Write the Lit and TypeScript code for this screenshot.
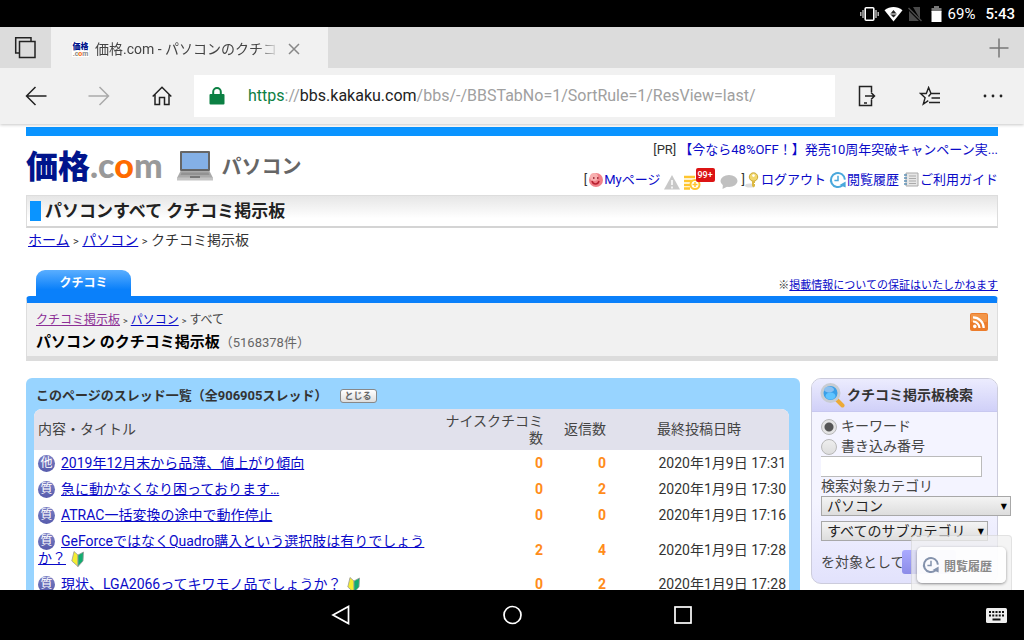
import { LitElement, html, css, svg } from "lit";
import { customElement } from "lit/decorators.js";

interface Thread {
  kind: string;
  title: string;
  beginner: boolean;
  nice: number;
  replies: number;
  date: string;
}

const threads: Thread[] = [
  { kind: "他", title: "2019年12月末から品薄、値上がり傾向", beginner: false, nice: 0, replies: 0, date: "2020年1月9日 17:31" },
  { kind: "質", title: "急に動かなくなり困っております…", beginner: false, nice: 0, replies: 2, date: "2020年1月9日 17:30" },
  { kind: "質", title: "ATRAC一括変換の途中で動作停止", beginner: false, nice: 0, replies: 0, date: "2020年1月9日 17:16" },
  { kind: "質", title: "GeForceではなくQuadro購入という選択肢は有りでしょうか？", beginner: true, nice: 2, replies: 4, date: "2020年1月9日 17:28" },
  { kind: "質", title: "現状、LGA2066ってキワモノ品でしょうか？", beginner: true, nice: 0, replies: 2, date: "2020年1月9日 17:28" },
];

const historyIcon = (color: string, size: number) => html`<svg width=${size} height=${size} viewBox="0 0 18 18" fill="none" aria-hidden="true">
  ${svg`<path d="M13.6 14.2A7 7 0 1 1 15.9 8.600" stroke=${color} stroke-width="2"/>
  <path d="M16.600 16.600v-6l-6 3.400z" fill=${color}/>
  <path d="M9 4.800v4.700H5.400" stroke=${color} stroke-width="1.500"/>`}
</svg>`;

const reset = css`
  * { box-sizing: border-box; }
  button { font: inherit; color: inherit; border: 0; background: none; padding: 0; margin: 0; }
  svg { display: block; }
  a { color: #0a0ac8; }
`;

@customElement("status-bar")
class StatusBar extends LitElement {
  static styles = [reset, css`
    :host { display: flex; align-items: center; justify-content: flex-end; height: 27px; padding-right: 9px; background: #000; color: #fff; font-size: 15px; line-height: 28px; }
    .icons { display: flex; align-items: center; gap: 5px; margin-right: 3px; }
    .clock { margin-left: 10px; font-weight: 500; }
  `];
  render() {
    return html`
      <div class="icons">
        <svg width="19" height="16" viewBox="0 0 19 16" aria-hidden="true">
          <rect x="5.2" y="1.7" width="8.6" height="12.6" rx="1" fill="none" stroke="#fff" stroke-width="1.6"/>
          <path d="M3 4v8M16 4v8M.8 6v4M18.2 6v4" stroke="#ccc" stroke-width="1.3"/>
        </svg>
        <svg width="19" height="16" viewBox="0 0 19 16" aria-hidden="true">
          <path d="M.5 4.2C6-.1 13-.1 18.5 4.2L9.500 15.500z" fill="#fff"/>
          <path d="M9.500 4 12 7H7zM9.500 11.500 7 9h5z" fill="#222"/><path d="M6.500 8h6" stroke="#222"/>
        </svg>
        <svg width="14" height="16" viewBox="0 0 14 16" aria-hidden="true">
          <path d="M5 1h7v12zM1 5l10 10H1z" fill="#4a4a4a"/><path d="M.5 2l13 13" stroke="#4a4a4a" stroke-width="1.4"/>
        </svg>
        <svg width="18" height="16" viewBox="0 0 18 16" aria-hidden="true">
          <path d="M7 0h5v2h2.500v4h-10V2H7z" fill="#777"/><path d="M4.500 5h10v11h-10z" fill="#fff"/>
        </svg>
      </div>
      <span>69%</span><span class="clock">5:43</span>`;
  }
}

@customElement("browser-chrome")
class BrowserChrome extends LitElement {
  static styles = [reset, css`
    :host { display: block; background: #f1f1f1; color: #222; position: relative; z-index: 1; box-shadow: 0 1px 3px rgba(0, 0, 0, .22); }
    .tabs { display: flex; align-items: stretch; height: 41px; background: #dcdcdc; }
    .all { width: 51px; display: flex; align-items: center; justify-content: center; }
    .tab { display: flex; align-items: center; width: 277px; padding: 3px 28px 0 21px; background: #f1f1f1; }
    .favicon { flex: none; width: 17px; padding-top: 1px; background: #fff; font-size: 8px; line-height: 8px; font-weight: 900; color: #00148c; text-align: center; }
    .favicon small { display: block; font-size: 7px; line-height: 6px; font-weight: 700; color: #888; }
    .favicon em { font-style: normal; color: #f60; }
    .title { flex: 1; margin: 0 9px 0 6px; font-size: 14px; line-height: 24px; color: #444; white-space: nowrap; overflow: hidden; mask-image: linear-gradient(90deg, #000 88%, transparent); }
    .new { margin-left: auto; width: 51px; display: flex; align-items: center; justify-content: center; }
    .tools { display: flex; align-items: center; height: 56px; padding-left: 4px; }
    .nav { flex: none; width: 63px; display: flex; justify-content: center; }
    .address { flex: 1; display: flex; align-items: center; gap: 23px; height: 42px; margin-left: 1px; padding: 0 15px; background: #fff; font-size: 16px; line-height: 24px; color: #a0a0a0; white-space: nowrap; }
    .scheme { color: #0b8043; }
    .host { color: #222; }
  `];
  render() {
    return html`
      <div class="tabs">
        <button class="all" aria-label="タブ一覧">
          <svg width="23" height="23" viewBox="0 0 23 23" fill="none" stroke="#222" stroke-width="1.500"><path d="M5.500 17H1.700V1.700H17v3.500"/><path d="M5.500 5.500h15.500v16H5.500z"/></svg>
        </button>
        <div class="tab">
          <span class="favicon">価格<small>.c<em>o</em>m</small></span>
          <span class="title">価格.com - パソコンのクチコ</span>
          <button aria-label="タブを閉じる"><svg width="12" height="12" viewBox="0 0 12 12" stroke="#888" stroke-width="1.500"><path d="M1 1l10 10M11 1L1 11"/></svg></button>
        </div>
        <button class="new" aria-label="新しいタブ"><svg width="20" height="20" viewBox="0 0 20 20" stroke="#777" stroke-width="1.500"><path d="M10 .5v19M.5 10h19"/></svg></button>
      </div>
      <div class="tools">
        <button class="nav" aria-label="戻る"><svg width="22" height="20" viewBox="0 0 22 20" fill="none" stroke="#222" stroke-width="1.500"><path d="M21.500 10H1.500M10.500 1l-9 9 9 9"/></svg></button>
        <button class="nav" aria-label="進む"><svg width="22" height="20" viewBox="0 0 22 20" fill="none" stroke="#aaa" stroke-width="1.500"><path d="M.5 10h20M11.500 1l9 9-9 9"/></svg></button>
        <button class="nav" aria-label="ホーム"><svg width="20" height="20" viewBox="0 0 20 20" fill="none" stroke="#222" stroke-width="1.500"><path d="M.7 10.500 10 1.300l9.300 9.200M3 8.500V18.500h4.500V11.500h5v7H17v-10"/></svg></button>
        <div class="address">
          <svg width="16" height="18" viewBox="0 0 16 18"><path d="M4.200 8V4.800a3.800 3.800 0 0 1 7.600 0V8" fill="none" stroke="#0b8043" stroke-width="2"/><rect x=".5" y="7" width="15" height="10.500" rx="1" fill="#0b8043"/></svg>
          <span><span class="scheme">https</span>://<span class="host">bbs.kakaku.com</span>/bbs/-/BBSTabNo=1/SortRule=1/ResView=last/</span>
        </div>
        <button class="nav" aria-label="PCで続行"><svg width="18" height="22" viewBox="0 0 18 22" fill="none" stroke="#222" stroke-width="1.500"><path d="M13.500 7V1.500h-12v19h12V15M7 11h9M13 7.500l3.500 3.500-3.500 3.500"/><path d="M6 18h3"/></svg></button>
        <button class="nav" aria-label="お気に入り"><svg width="22" height="20" viewBox="0 0 22 20" fill="none" stroke="#222" stroke-width="1.400"><path d="M21 7.500h-9L9.600 1.500 7.300 7.500H1.500l4.600 4.300L4.300 18l5-3.400M12 7.500l-2.500 3M12.500 12H21M10 16.500h11"/></svg></button>
        <button class="nav" aria-label="設定など"><svg width="20" height="4" viewBox="0 0 20 4" fill="#222"><circle cx="2" cy="2" r="1.400"/><circle cx="10" cy="2" r="1.400"/><circle cx="18" cy="2" r="1.400"/></svg></button>
      </div>`;
  }
}

@customElement("site-header")
class SiteHeader extends LitElement {
  static styles = [reset, css`
    :host { display: block; border-top: 9px solid #0a94ff; }
    .top { display: flex; justify-content: space-between; height: 59px; }
    .brand { display: flex; align-items: center; gap: 14px; }
    .logo { display: flex; align-items: baseline; font-size: 32px; line-height: 40px; font-weight: 900; color: #00148c; text-decoration: none; }
    .com { font-family: Lato, sans-serif; font-size: 34px; color: #999; }
    .com em { font-style: normal; color: #ff6a00; }
    .category { margin-left: -5px; font-size: 20px; font-weight: 700; color: #666; }
    .side { font-size: 13px; line-height: 20px; padding-top: 4px; }
    .side a { text-decoration: none; }
    .pr { display: flex; justify-content: flex-end; gap: 3px; }
    .links { display: flex; align-items: center; justify-content: flex-end; margin-top: 10px; }
    .links a { display: flex; align-items: center; margin-right: 3px; }
    .links a:last-child { margin-right: 0; }
    .note { position: relative; margin: 4px 19px 0 4px; }
    .count { position: absolute; left: 12px; top: -7px; padding: 0 2px; border-radius: 2px; background: #dc1414; color: #fff; font-size: 9px; line-height: 14px; font-weight: 500; }
    .gray { margin-top: 4px; }
    .bubble { margin: 4px 4px 0 0; }
    h1 { display: flex; align-items: center; gap: 4px; margin: 0; height: 33px; padding-left: 3px; border: 1px solid #ddd; border-bottom: 2px solid #d4d4d4; background: linear-gradient(#e6e6e6, #fff 75%); color: #222; font-size: 17px; line-height: 30px; }
    h1::before { content: ""; width: 11px; height: 20px; background: #0a94ff; }
    .crumbs { padding: 2px 2px 0; font-size: 14px; line-height: 20px; color: #333; }
    .gt { font-size: 11px; }
  `];
  render() {
    return html`
      <div class="top">
        <div class="brand">
          <a class="logo" href="#">価格<span class="com">.c<em>o</em>m</span></a>
          <svg width="36" height="30" viewBox="0 0 36 30" aria-hidden="true">
            <rect x="3" y="0" width="30" height="20" rx="1" fill="#666"/><rect x="5" y="2" width="26" height="16" fill="#84b0e6"/>
            <path d="M3.500 20h29l3.500 7H0z" fill="#aaa"/><path d="M0 26.500h36v3H0z" fill="#c4c4c4"/><path d="M4.500 21.500h27l1 2.500H3.500z" fill="#929292"/><path d="M13 25h10v2H13z" fill="#777"/>
          </svg>
          <span class="category">パソコン</span>
        </div>
        <div class="side">
          <div class="pr"><span>[PR]</span><a href="#">【今なら48%OFF！】発売10周年突破キャンペーン実...</a></div>
          <div class="links">
            <span>[</span>
            <a href="#"><svg width="17" height="16" viewBox="0 0 17 16"><circle cx="9" cy="8" r="7" fill="#f08088"/><circle cx="7" cy="5" r="4" fill="#f8b0b0"/><path d="M5 9c1 4 6 4 7 0" fill="none" stroke="#b82030" stroke-width="1.500"/><path d="M6 6h1.500M10 6h1.500" stroke="#901828" stroke-width="1.500"/></svg>Myページ</a>
            <svg class="gray" width="16" height="15" viewBox="0 0 16 15" aria-hidden="true"><path d="M8 0l8 14.500H0z" fill="#c8c8c8"/><path d="M8 5v5M8 11.500v2" stroke="#fff" stroke-width="1.500"/></svg>
            <span class="note"><svg width="17" height="15" viewBox="0 0 17 15" aria-hidden="true"><path d="M0 2h11M0 6h9M0 10h6M0 13.500h6" stroke="#ffc52e" stroke-width="2.500"/><circle cx="11" cy="9.500" r="4.500" fill="#fff" stroke="#ffc52e" stroke-width="2"/><path d="M11 7v5M8.500 9.500h5" stroke="#ffc52e" stroke-width="1.500"/></svg><span class="count">99+</span></span>
            <svg class="bubble" width="18" height="14" viewBox="0 0 18 14" aria-hidden="true"><ellipse cx="9" cy="6" rx="8.500" ry="6" fill="#c0c0c0"/><path d="M3 9l-.5 5 6-3z" fill="#c0c0c0"/></svg>
            <span>]</span>
            <a href="#"><svg width="16" height="16" viewBox="0 0 16 16"><ellipse cx="5" cy="13.500" rx="5" ry="2" fill="#ddd"/><circle cx="8.500" cy="5" r="4.200" fill="#f2d76c" stroke="#c9a93a"/><circle cx="8.500" cy="3.600" r="1.300" fill="#fff"/><path d="M7 9h3v2H9v1h1v2l-1.500 1.500L7 14z" fill="#dcb942"/></svg>ログアウト</a>
            <a href="#">${historyIcon("#4aa8dc", 18)}閲覧履歴</a>
            <a href="#"><svg width="18" height="16" viewBox="2 0 18 16"><path d="M6 1h12v13H6z" fill="#e6e6e6" stroke="#aaa"/><path d="M9 4h7M9 6.500h7M9 9h7M9 11.500h7" stroke="#aaa"/><path d="M4 3h3M4 6h3M4 9h3M4 12h3" stroke="#5f93b8" stroke-width="1.400"/></svg>ご利用ガイド</a>
          </div>
        </div>
      </div>
      <h1>パソコンすべて クチコミ掲示板</h1>
      <nav class="crumbs"><a href="#">ホーム</a> <span class="gt">&gt;</span> <a href="#">パソコン</a> <span class="gt">&gt;</span> クチコミ掲示板</nav>`;
  }
}

@customElement("board-heading")
class BoardHeading extends LitElement {
  static styles = [reset, css`
    :host { display: block; margin-top: 18px; }
    .row { display: flex; justify-content: space-between; align-items: flex-end; padding-left: 10px; }
    .tab { width: 95px; border-radius: 9px 9px 0 0; background: linear-gradient(#5aaeff, #0a80fa 75%); color: #fff; font-size: 12px; line-height: 26px; font-weight: 700; text-align: center; text-decoration: none; }
    .notice { font-size: 11px; line-height: 20px; }
    .panel { display: flex; justify-content: space-between; align-items: flex-start; padding: 7px 9px 3px; border: 1px solid #ddd; border-top: 7px solid #0a80fa; border-bottom: 5px solid #dcdcdc; border-radius: 4px 4px 0 0; background: #f1f1f1; }
    .crumbs { font-size: 12px; line-height: 20px; color: #444; }
    .visited { color: #8c2f96; }
    .gt { font-size: 9px; }
    h2 { margin: 0; font-size: 15px; line-height: 22px; color: #000; }
    .total { font-size: 13px; line-height: 20px; font-weight: 400; color: #666; }
    .rss { margin-top: 3px; }
  `];
  render() {
    return html`
      <div class="row">
        <a class="tab" href="#">クチコミ</a>
        <span class="notice">※<a href="#">掲載情報についての保証はいたしかねます</a></span>
      </div>
      <div class="panel">
        <div>
          <nav class="crumbs"><a class="visited" href="#">クチコミ掲示板</a> <span class="gt">&gt;</span> <a href="#">パソコン</a> <span class="gt">&gt;</span> すべて</nav>
          <h2>パソコン のクチコミ掲示板<span class="total">（5168378件）</span></h2>
        </div>
        <a class="rss" href="#" aria-label="RSS"><svg width="18" height="18" viewBox="0 0 18 18"><rect width="18" height="18" rx="2" fill="#ec7d2c"/><rect x="1" y="1" width="16" height="8" rx="1" fill="#f29548"/><circle cx="4.800" cy="13.400" r="1.800" fill="#fff"/><path d="M3 8.500a6.500 6.500 0 0 1 6.500 6.500M3 4.300A10.700 10.700 0 0 1 13.700 15" fill="none" stroke="#fff" stroke-width="2.200"/></svg></a>
      </div>`;
  }
}

@customElement("thread-list")
class ThreadList extends LitElement {
  static styles = [reset, css`
    :host { display: block; padding: 0 11px 0 8px; border-radius: 6px 6px 0 0; background: #98d4ff; }
    .head { display: flex; align-items: center; gap: 12px; height: 31px; padding: 4px 0 0 2px; }
    h3 { margin: 0; font-size: 13px; line-height: 20px; color: #333; }
    .close { height: 14px; padding: 0 4px; border: 1px solid #888; border-radius: 3px; background: linear-gradient(#fff, #ddd); color: #666; font-size: 9px; line-height: 12px; font-weight: 700; }
    table { width: 100%; table-layout: fixed; border-collapse: collapse; background: #fff; border-radius: 8px 8px 0 0; overflow: hidden; font-size: 14px; line-height: 17px; }
    th { height: 41px; padding: 3px; background: #e1e1ec; font-weight: 400; color: #444; text-align: right; }
    td { padding: 5px 3px 4px; text-align: right; vertical-align: middle; }
    .title { text-align: left; padding-left: 4px; }
    .nice { width: 113px; }
    .reply { width: 63px; }
    .date { width: 180px; text-align: center; }
    .num { color: #ff8c1a; font-weight: 700; }
    .kind { display: inline-block; width: 17px; height: 17px; margin-right: 6px; border-radius: 50%; background: linear-gradient(#7b7fc4, #565bac); color: #fff; font-size: 12px; line-height: 17px; text-align: center; vertical-align: bottom; }
    .leaf { display: inline-block; margin: -3px 0 -3px 5px; vertical-align: middle; }
  `];
  render() {
    return html`
      <div class="head"><h3>このページのスレッド一覧（全906905スレッド）</h3><button class="close">とじる</button></div>
      <table>
        <thead><tr><th class="title">内容・タイトル</th><th class="nice">ナイスクチコミ数</th><th class="reply">返信数</th><th class="date">最終投稿日時</th></tr></thead>
        <tbody>
          ${threads.map((t) => html`<tr>
            <td class="title"><span class="kind">${t.kind}</span><a href="#">${t.title}</a>${t.beginner
              ? html`<svg class="leaf" width="13" height="16" viewBox="0 0 13 16" aria-hidden="true"><path d="M3 .5 7 4v11.500L.8 10z" fill="#f4ee30" stroke="#999" stroke-width=".8"/><path d="M7 4 12.500 1 12 10l-5 5.500z" fill="#12ad70" stroke="#999" stroke-width=".8"/></svg>`
              : ""}</td>
            <td class="num">${t.nice}</td><td class="num">${t.replies}</td><td>${t.date}</td>
          </tr>`)}
        </tbody>
      </table>`;
  }
}

@customElement("board-search")
class BoardSearch extends LitElement {
  static styles = [reset, css`
    :host { display: block; align-self: start; border: 1px solid #ccccdc; border-radius: 10px; background: linear-gradient(#f4f4ff 60%, #e2e2fc); }
    h3 { display: flex; align-items: center; gap: 2px; margin: 0; height: 33px; padding-left: 8px; border-bottom: 1px solid #c8c8f0; border-radius: 9px 9px 0 0; background: linear-gradient(#ececfe, #d0d0f8); color: #333; font-size: 14px; line-height: 30px; }
    form { padding: 4px 0 9px 9px; font-size: 14px; line-height: 20px; color: #444; }
    .choice { display: flex; align-items: center; gap: 4px; }
    .choice input { appearance: none; width: 16px; height: 16px; margin: 2px 0 0; border: 1px solid #b8b8b8; border-radius: 50%; background: linear-gradient(#eee, #ddd); }
    .choice input:checked { background: radial-gradient(#555 0 4px, #e4e4e4 5px); }
    .word { display: block; width: 161px; height: 21px; margin: 0; border: 1px solid #bbb; border-left: 0; background: #fff; font: inherit; }
    .cat { display: block; line-height: 19px; }
    .pick { position: relative; display: block; width: 190px; margin-bottom: 5px; }
    .pick::after { content: "▼"; position: absolute; right: 4px; top: 0; font-family: "DejaVu Sans", sans-serif; font-size: 8px; line-height: 21px; color: #000; pointer-events: none; }
    .sub { width: 167px; }
    select { appearance: none; display: block; width: 100%; height: 20px; padding: 0 0 0 5px; border: 1px solid #a8a8a8; border-radius: 0; background: linear-gradient(#f4f4f4, #ddd); color: #222; font: inherit; line-height: 18px; }
    .go { display: flex; align-items: center; margin-top: 9px; height: 24px; }
    .go button { width: 54px; height: 24px; margin-left: -3px; border-radius: 3px; background: linear-gradient(#aaaaff, #8c8ce8); color: #fff; font-weight: 700; }
  `];
  render() {
    return html`
      <h3><svg width="25" height="25" viewBox="0 0 25 25" aria-hidden="true"><path d="M16 16l6.500 6.500" stroke="#ecaa36" stroke-width="4" stroke-linecap="round"/><circle cx="10.500" cy="10" r="8.500" fill="#3a9fe8" stroke="#c8ccd2" stroke-width="3"/><ellipse cx="10.500" cy="13" rx="5" ry="3.500" fill="#60c4ff"/><ellipse cx="9" cy="6.500" rx="5" ry="3" fill="#8bc0f0"/></svg>クチコミ掲示板検索</h3>
      <form>
        <label class="choice"><input type="radio" name="mode" checked>キーワード</label>
        <label class="choice"><input type="radio" name="mode">書き込み番号</label>
        <input class="word" type="text" aria-label="キーワード">
        <label class="cat" for="category">検索対象カテゴリ</label>
        <span class="pick"><select id="category"><option>パソコン</option></select></span>
        <span class="pick sub"><select aria-label="サブカテゴリ"><option>すべてのサブカテゴリ</option></select></span>
        <div class="go"><span>を対象として</span><button type="button" aria-label="検索"></button></div>
      </form>`;
  }
}

@customElement("system-nav")
class SystemNav extends LitElement {
  static styles = [reset, css`
    :host { display: grid; grid-template-columns: 3fr 2fr 2fr 2fr 3fr; align-items: center; justify-items: center; height: 50px; background: #000; }
    .back { grid-column: 2; }
    .keys { justify-self: end; margin-right: 17px; }
  `];
  render() {
    return html`
      <button class="back" aria-label="戻る"><svg width="20" height="20" viewBox="0 0 20 20"><path d="M17.500 1.500v17L2 10z" fill="none" stroke="#fff" stroke-width="1.700"/></svg></button>
      <button aria-label="ホーム"><svg width="20" height="20" viewBox="0 0 20 20"><circle cx="10.500" cy="10" r="8.500" fill="none" stroke="#fff" stroke-width="1.700"/></svg></button>
      <button aria-label="履歴"><svg width="20" height="20" viewBox="0 0 20 20"><rect x="2" y="2" width="16" height="16" fill="none" stroke="#fff" stroke-width="1.700"/></svg></button>
      <button class="keys" aria-label="キーボード"><svg width="21" height="15" viewBox="0 0 21 15"><rect width="21" height="15" rx="1.500" fill="#eee"/><path d="M3 4h15M3 7.500h15" stroke="#111" stroke-width="2" stroke-dasharray="2 1.250"/><path d="M6.500 11.500h8" stroke="#111" stroke-width="2"/></svg></button>`;
  }
}

@customElement("app-root")
class AppRoot extends LitElement {
  static styles = [reset, css`
    :host { display: flex; flex-direction: column; height: 100vh; overflow: hidden; background: #fff; color: #333; font-family: Roboto, "Noto Sans CJK JP", sans-serif; }
    .page { position: relative; flex: 1; min-height: 0; overflow: hidden; padding: 3px 26px 0; }
    .columns { display: grid; grid-template-columns: 1fr 187px; gap: 11px; margin-top: 17px; }
    .float { position: absolute; right: 12px; bottom: 0; padding: 11px 5px 7px; border: 1px solid rgba(0, 0, 0, .07); border-bottom: 0; border-radius: 4px 4px 0 0; background: rgba(240, 240, 240, .72); }
    .float button { display: flex; align-items: center; gap: 4px; height: 36px; padding: 0 14px 0 5px; border-radius: 5px; background: rgba(255, 255, 255, .88); box-shadow: 0 1px 3px rgba(0, 0, 0, .4); color: #888; font-size: 12px; font-weight: 700; white-space: nowrap; }
  `];
  render() {
    return html`
      <status-bar></status-bar>
      <browser-chrome></browser-chrome>
      <main class="page">
        <site-header></site-header>
        <board-heading></board-heading>
        <div class="columns"><thread-list></thread-list><board-search></board-search></div>
        <div class="float"><button>${historyIcon("#8492ac", 18)}閲覧履歴</button></div>
      </main>
      <system-nav></system-nav>`;
  }
}
